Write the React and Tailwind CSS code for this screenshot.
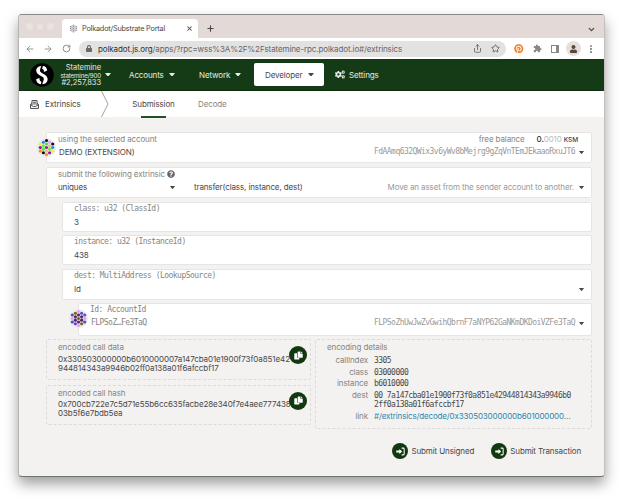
import React from "react";
import { ArrowLeft, ArrowRight, RotateCw, X, Plus, ChevronDown, Share, Star, MoreVertical } from "lucide-react";
import { FaLock, FaCogs, FaUser, FaPinterest, FaQuestionCircle } from "react-icons/fa";
import { MdExtension } from "react-icons/md";

const mono = "font-['DejaVu_Sans_Mono',monospace] text-[8px] tracking-[-0.540px]";
const monoLabel = "font-['DejaVu_Sans_Mono',monospace] text-[8px] tracking-[-0.520px]";

function Caret({ className = "" }) {
  return (
    <svg viewBox="0 0 10 6" className={"shrink-0 " + className} fill="currentColor">
      <path d="M1 0h8q1 0 .5.9L5.7 5.4q-.7.7-1.4 0L.5.9Q0 0 1 0z" />
    </svg>
  );
}

function Logo() {
  return (
    <svg viewBox="0 0 24 24" className="h-6 w-6 shrink-0">
      <circle cx="12" cy="12" r="11.800" fill="#000" />
      <path d="M11.300 3C7.800 3.300 6 5.500 6.300 8c.4 3 3.300 4.200 5.600 5.400 2 1.100 2.300 2.300 1.600 4.200-.4 1.100-.9 2.400-1.200 3.700 3.500-.2 5.600-2.600 5.300-5.500-.3-2.800-2.600-4.100-4.900-5.300-2.400-1.200-3.100-2.200-2.600-4 .3-1.200.8-2.300 1.200-3.500z" fill="#fff" />
      <path d="M12.900 3.100c2.400.1 4.200 1.700 4.300 4.500l-3.300 1.300c.2-1.600-.3-2.800-1.800-3.200zM10.800 21.300c-2.700-.2-4.500-1.900-4.600-5l3.300-1.200c-.1 2 .4 3.200 2 3.600z" fill="#fff" />
    </svg>
  );
}

const DOTS = [
  [12, 3], [8, 5.2], [16, 5.2], [4, 7.500], [12, 7.500], [20, 7.500], [8, 9.800], [16, 9.800],
  [4, 12], [12, 12], [20, 12], [8, 14.200], [16, 14.200], [4, 16.500], [12, 16.500], [20, 16.500],
  [8, 18.800], [16, 18.800], [12, 21],
];
const DEMO = ["#111", "#2487f0", "#ee9bf0", "#faf02a", "#50df35", "#111", "#6ae845", "#f4b48c", "#8e1690", "#a0189b", "#258af2", "#5dea35", "#77e84a", "#ff8a25", "#f4b48c", "#faf02a", "#111", "#a31394", "#ff8a25"];
const DEST = ["#e99ee6", "#6d6a16", "#5b4fd0", "#514fd2", "#5b2170", "#5b4fd0", "#5b2170", "#5b2170", "#e99ee6", "#6d6a16", "#e99ee6", "#5b2170", "#5b2170", "#5148cc", "#5b2170", "#5148cc", "#5148cc", "#6d6a16", "#e99ee6"];

function Identicon({ colors }) {
  return (
    <svg viewBox="0 0 24 24" className="absolute top-[5px] -left-[10px] h-[19px] w-[19px]">
      <circle cx="12" cy="12" r="12" fill="#eaeaea" />
      {DOTS.map(([x, y], i) => (
        <circle key={i} cx={12 + (x - 12) * 0.98} cy={12 + (y - 12) * 0.98} r="2" fill={colors[i]} />
      ))}
    </svg>
  );
}

function Field({ label, children, className = "", labelClass = "", aside, icon }) {
  return (
    <div className={"relative rounded-[2px] border border-[#e6e5e4] bg-white pl-[11px] " + className}>
      {icon}
      <div className="flex h-3 items-center text-[#858585]">
        <span className={labelClass}>{label}</span>
        {aside}
      </div>
      <div className="mt-px flex h-3 items-center text-[#484848]">{children}</div>
    </div>
  );
}

function Copy() {
  return (
    <span className="absolute top-[6px] right-[3px] flex h-[18px] w-[18px] items-center justify-center rounded-full bg-[#12380f] text-white">
      <svg viewBox="0 0 16 16" className="h-[9px] w-[9px]" fill="currentColor">
        <path d="M1.500 4h4v8h4v2q0 1-1 1h-7q-1 0-1-1V5q0-1 1-1z" />
        <path d="M7.500 1h4v4h4v6q0 1-1 1h-7q-1 0-1-1V2q0-1 1-1zM12.500 1l3 3h-3z" />
      </svg>
    </span>
  );
}

function Submit({ children }) {
  return (
    <div className="flex items-center gap-[3px]">
      <span className="flex h-4 w-4 items-center justify-center rounded-full bg-[#12380f] text-white">
        <svg viewBox="0 0 16 16" className="h-[9px] w-[9px]" fill="currentColor">
          <path d="M6 3.500L11 8l-5 4.500V9.800H.5V6.200H6z" />
          <path d="M10 2h3q1.500 0 1.500 1.500v9q0 1.500-1.500 1.500h-3" fill="none" stroke="currentColor" strokeWidth="1.800" />
        </svg>
      </span>
      <span>{children}</span>
    </div>
  );
}

function Detail({ label, children }) {
  return (
    <div className="flex">
      <span className="w-[41px] shrink-0 text-right text-[#858585]">{label}</span>
      <span className="ml-[6px]">{children}</span>
    </div>
  );
}

export default function App() {
  return (
    <div className="h-[500px] w-[623px] overflow-hidden bg-white pt-[14px] pl-[18px] font-['Inter',sans-serif] text-[8px] leading-3 tracking-[-0.120px] text-[#484848] whitespace-nowrap">
      <div className="flex h-[463px] w-[587px] flex-col overflow-hidden rounded-[4px] border border-t-[#8c888a] border-r-[#c3bfbd] border-b-[#6e746c] border-l-[#b7b5b3] bg-[#f3f2f1] shadow-[0_7px_14px_rgba(0,0,0,0.38)]">
        <div className="flex h-[23px] shrink-0 items-end bg-[#e3dad7]">
          <div className="flex h-full w-[43px] items-center gap-[4px] pl-[7px]">
            <i className="h-[6.500px] w-[6.500px] rounded-full bg-[#e9e2df]" />
            <i className="h-[6.500px] w-[6.500px] rounded-full bg-[#e9e2df]" />
            <i className="h-[6.500px] w-[6.500px] rounded-full bg-[#e9e2df]" />
          </div>
          <div className="flex h-[19px] w-[136px] items-center rounded-t-[4px] bg-white pl-[7px]">
            <svg viewBox="0 0 24 24" className="h-[9px] w-[9px]">
              {DOTS.map(([x, y], i) => (
                <circle key={i} cx={x} cy={y} r="1.900" fill={i % 5 === 2 ? "#b99" : "#95959c"} />
              ))}
            </svg>
            <span className="ml-[4px] w-[103px] text-[7.300px] tracking-[-0.200px]">Polkadot/Substrate Portal</span>
            <X className="ml-px h-[7px] w-[7px]" strokeWidth={3.500} />
          </div>
          <Plus className="mb-[5px] ml-[8px] h-[9px] w-[9px]" strokeWidth={3} />
          <ChevronDown className="mr-[8px] mb-[4px] ml-auto h-[9px] w-[9px]" strokeWidth={3.500} />
        </div>
        <div className="flex h-[21px] shrink-0 items-center bg-white text-[#6a6a6a]">
          <ArrowLeft className="ml-[6px] h-[10px] w-[10px] text-[#858585]" strokeWidth={2} />
          <ArrowRight className="ml-[8px] h-[10px] w-[10px] text-[#858585]" strokeWidth={2} />
          <RotateCw className="ml-[9px] h-[9px] w-[9px] text-[#858585]" strokeWidth={2.400} />
          <div className="ml-[8px] flex h-[16px] w-[427px] items-center rounded-full bg-[#e2e2e2] pr-[6px] pl-[7px]">
            <FaLock className="h-[7px] w-[6px]" />
            <span className="ml-[6px] text-[8px] tracking-[-0.110px] text-[#666]"><span className="text-[#303030]">polkadot.js.org</span>/apps/?rpc=wss%3A%2F%2Fstatemine-rpc.polkadot.io#/extrinsics</span>
            <Share className="ml-auto h-[9px] w-[9px]" strokeWidth={2.400} />
            <Star className="ml-[9px] h-[9px] w-[9px]" strokeWidth={2.600} />
          </div>
          <FaPinterest className="ml-[8px] h-[9.500px] w-[9.500px] text-[#f57f20]" />
          <MdExtension className="ml-[9px] h-[9px] w-[9px] text-[#888]" />
          <i className="ml-[9px] h-[8px] w-[8px] border border-r-[3px] border-[#888]" />
          <span className="ml-[7px] flex h-[15px] w-[15px] items-center justify-center rounded-full bg-[#e6dedb] text-[#594641]">
            <FaUser className="h-[8px] w-[7px]" />
          </span>
          <MoreVertical className="ml-[5px] h-[10px] w-[10px]" strokeWidth={2.600} />
        </div>
        <div className="flex h-[32px] shrink-0 items-center border-b border-[#0d2f0b] bg-[#153a16] text-white/90">
          <div className="ml-[11px]"><Logo /></div>
          <div className="ml-[4px] flex w-[43px] flex-col items-end pt-[2px] text-[7.500px] leading-[7.800px] tracking-[-0.020px]">
            <span>Statemine</span>
            <span className="text-[6.200px] tracking-[-0.140px]">statemine/900</span>
            <span className="text-[7.500px]">#2,257,833</span>
          </div>
          <Caret className="ml-[4px] h-[3.600px] w-[6px]" />
          <span className="ml-[18px] w-[35px]">Accounts</span>
          <Caret className="ml-[5px] h-[3.600px] w-[6px]" />
          <span className="ml-[24px] w-[32px]">Network</span>
          <Caret className="ml-[4px] h-[3.600px] w-[6px]" />
          <div className="ml-[13px] flex h-[23px] w-[70px] items-center rounded-[2px] bg-white pl-[11px] text-[#484848]">
            <span className="w-[38px]">Developer</span>
            <Caret className="ml-[5px] h-[3.600px] w-[6px]" />
          </div>
          <FaCogs className="ml-[11px] h-[9px] w-[10px]" />
          <span className="ml-[4px]">Settings</span>
        </div>
        <div className="flex h-[26px] shrink-0 items-center bg-white">
          <svg viewBox="0 0 16 16" className="ml-[11px] h-[9px] w-[9px]" fill="none" stroke="#444" strokeWidth="1.700">
            <path d="M3.500 6L1 7.500V15h14V7.500L12.500 6M1 8.500l5 3h4l5-3" />
            <path d="M3.500 9V1h9v8M5.500 4h5M5.500 7h5" />
          </svg>
          <span className="ml-[6px] w-[56px]">Extrinsics</span>
          <svg viewBox="0 0 8 26" className="h-[26px] w-[8px]" fill="none" stroke="#8d9c8c" strokeWidth=".9">
            <path d="M.5 0l6.500 13L.5 26" />
          </svg>
          <div className="relative ml-[23px] flex h-full w-[43px] items-center justify-center">
            Submission
            <i className="absolute -bottom-px left-[9px] h-[2px] w-[25px] bg-[#235126]" />
          </div>
          <span className="ml-[23px] text-[#858585]">Decode</span>
        </div>

        <main className="pt-[15px] pl-[27px]">
          <Field label="using the selected account" className="h-[31px] w-[546px]" icon={<Identicon colors={DEMO} />}
            aside={<span className="mr-[13px] ml-auto flex"><span>free balance</span><span className="ml-[12px]"><b className="font-medium text-[#333]">0.</b><span className="text-[#bbb]">0010</span> <span className="text-[6.500px] font-medium text-[#444]">KSM</span></span></span>}>
            <span className="ml-px">DEMO (EXTENSION)</span>
            <span className={mono + " ml-auto text-[#999]"}>FdAAmq632QWix3v6yWv8bMejrg9gZqVnTEmJEkaaoRxuJT6</span>
            <Caret className="mr-[7px] ml-[4px] h-[3px] w-[5px]" />
          </Field>
          <Field label="submit the following extrinsic" className="mt-[4px] h-[31px] w-[546px]"
            aside={<FaQuestionCircle className="ml-[2px] h-[8px] w-[8px] text-[#666]" />}>
            <span className="w-[112px]">uniques</span>
            <Caret className="h-[3px] w-[5px]" />
            <span className="ml-[19px]">transfer(class, instance, dest)</span>
            <span className="ml-auto tracking-[-0.130px] text-[#999]">Move an asset from the sender account to another.</span>
            <Caret className="mr-[7px] ml-[5px] h-[3px] w-[5px]" />
          </Field>
          <div className="pl-[16px]">
            <Field label="class: u32 (ClassId)" labelClass={monoLabel} className="mt-[4px] h-[30px] w-[530px]">3</Field>
            <Field label="instance: u32 (InstanceId)" labelClass={monoLabel} className="mt-[3px] h-[30px] w-[530px]">438</Field>
            <Field label="dest: MultiAddress (LookupSource)" labelClass={monoLabel} className="mt-[4px] h-[31px] w-[530px]">
              Id
              <Caret className="mr-[7px] ml-auto h-[3px] w-[5px]" />
            </Field>
            <div className="pl-[16px]">
              <Field label="Id: AccountId" labelClass={monoLabel} className="mt-[3px] h-[33px] w-[514px]" icon={<Identicon colors={DEST} />}>
                <span className={mono + " ml-px text-[#858585]"}>FLPSoZ…Fe3TaQ</span>
                <span className={mono + " ml-auto text-[#999]"}>FLPSoZhUwJwZvGwihQbrnF7aNYP62GaNKmDKDoiVZFe3TaQ</span>
                <Caret className="mr-[7px] ml-[4px] h-[3px] w-[5px]" />
              </Field>
            </div>
          </div>
          <div className="mt-[3px] flex gap-[4px]">
            <div className="flex w-[265px] flex-col gap-[5px]">
              <div className="relative h-[40.500px] rounded-[2px] border border-dashed border-[#dcdbda] pl-[11px] leading-[9.300px] tracking-[-0.085px]">
                <p className="h-[14.600px] leading-[14px] text-[#858585]">encoded call data</p>
                <p>0x330503000000b6010000007a147cba01e1900f73f0a851e42</p>
                <p>944814343a9946b02ff0a138a01f6afccbf17</p>
                <Copy />
              </div>
              <div className="relative h-[40.500px] rounded-[2px] border border-dashed border-[#dcdbda] pl-[11px] leading-[9.300px] tracking-[-0.085px]">
                <p className="h-[14.600px] leading-[14px] text-[#858585]">encoded call hash</p>
                <p>0x700cb722e7c5d71e55b6cc635facbe28e340f7e4aee7774383</p>
                <p>03b5f6e7bdb5ea</p>
                <Copy />
              </div>
            </div>
            <div className="h-[90px] w-[277px] rounded-[2px] border border-dashed border-[#dcdbda] pl-[11px] leading-[11.600px]">
              <p className="h-[15px] leading-[14px] text-[#858585]">encoding details</p>
              <Detail label="callIndex"><span className={mono}>3305</span></Detail>
              <Detail label="class"><span className={mono}>03000000</span></Detail>
              <Detail label="instance"><span className={mono}>b6010000</span></Detail>
              <Detail label="dest"><span className={mono + " block pt-px pb-px leading-[9.500px]"}>00 7a147cba01e1900f73f0a851e42944814343a9946b0<br />2ff0a138a01f6afccbf17</span></Detail>
              <Detail label="link"><span className="tracking-[-0.150px] text-[#2c87b0]">#/extrinsics/decode/0x330503000000b601000000…</span></Detail>
            </div>
          </div>
          <div className="mt-[14px] flex w-[535px] justify-end gap-[17px]">
            <Submit>Submit Unsigned</Submit>
            <Submit>Submit Transaction</Submit>
          </div>
        </main>
      </div>
    </div>
  );
}
